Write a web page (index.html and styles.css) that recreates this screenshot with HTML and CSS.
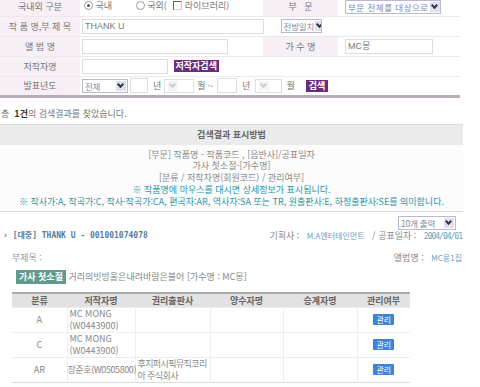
FILE: index.html
```html
<!DOCTYPE html>
<html lang="ko">
<head>
    <meta charset="UTF-8">
    <title>작품검색</title>
    <link rel="stylesheet" href="styles.css">
</head>
<body>
    <table class="search-form">
        <tr>
            <th>국내외 구분</th>
            <td class="val">
                <span class="radio on"></span> 국내
                <span class="radio"></span> 국외(
                <span class="check"></span> 라이브러리)
            </td>
            <th class="th-right">부 &nbsp; 문</th>
            <td class="val"><span class="sel sel-part">부문 전체를 대상으로<i class="arr"></i></span></td>
        </tr>
        <tr>
            <th>작 품 명,부 제 목</th>
            <td class="val" colspan="3">
                <span class="inp inp-title">THANK U</span>
                <span class="sel sel-match">전방일치<i class="arr"></i></span>
            </td>
        </tr>
        <tr>
            <th>앨 범 명</th>
            <td class="val"><span class="inp inp-album"></span></td>
            <th class="th-right">가 수 명</th>
            <td class="val"><span class="inp inp-singer">MC몽</span></td>
        </tr>
        <tr>
            <th>저작자명</th>
            <td class="val" colspan="3">
                <span class="inp inp-author"></span>
                <span class="btn-purple">저작자검색</span>
            </td>
        </tr>
        <tr>
            <th>발표년도</th>
            <td class="val" colspan="3">
                <div class="year-row">
                    <span class="sel sel-all">전체<i class="arr"></i></span>
                    <span class="inp inp-y1"></span>
                    <span class="unit u1">년</span>
                    <span class="sel sel-month m1"><i class="arr"></i></span>
                    <span class="unit u2">월 ~</span>
                    <span class="inp inp-y2"></span>
                    <span class="unit u3">년</span>
                    <span class="sel sel-month m2"><i class="arr"></i></span>
                    <span class="unit u4">월</span>
                    <span class="btn-purple btn-go">검색</span>
                </div>
            </td>
        </tr>
    </table>

    <p class="count">총 &nbsp;<b>1건</b>의 검색결과를 찾았습니다.</p>

    <div class="guide">
        <div class="guide-head">검색결과 표시방법</div>
        <div class="guide-body">
            <p>[부문] 작품명 - 작품코드 , [음반사]/공표일자</p>
            <p>가사 첫소절-[가수명]</p>
            <p>[분류 / 저작자명(회원코드) / 관리여부]</p>
            <p class="note">※ 작품명에 마우스를 대시면 상세정보가 표시됩니다.</p>
            <p class="note">※ 작사가:A, 작곡가:C, 작사·작곡가:CA, 편곡자:AR, 역사자:SA 또는 TR, 원출판사:E, 하청출판사:SE를 의미합니다.</p>
        </div>
    </div>

    <div class="per-page"><span class="sel sel-count">10개 출력<i class="arr"></i></span></div>

    <div class="result">
        <div class="result-line">
            <span class="work-title">› [대중] THANK U - 001001074078</span>
            <span class="meta">기획사 : <em class="ko">M.A엔터테인먼트</em> / 공표일자 : <em>2004/04/01</em></span>
        </div>
        <div class="result-line sub">
            <span class="subtitle">부제목 :</span>
            <span class="meta">앨범명 : <em class="ko">MC몽1집</em></span>
        </div>
        <div class="lyric">
            <span class="badge">가사 첫소절</span> 거리의빗방울은내려바람은불어 [가수명 : MC몽]
        </div>

        <table class="rights">
            <tr>
                <th class="c1">분류</th>
                <th class="c2">저작자명</th>
                <th class="c3">권리출판사</th>
                <th class="c4">양수자명</th>
                <th class="c5">승계자명</th>
                <th class="c6">관리여부</th>
            </tr>
            <tr>
                <td>A</td>
                <td class="left">MC MONG<br>(W0443900)</td>
                <td></td>
                <td></td>
                <td></td>
                <td><span class="btn-blue">관리</span></td>
            </tr>
            <tr>
                <td>C</td>
                <td class="left">MC MONG<br>(W0443900)</td>
                <td></td>
                <td></td>
                <td></td>
                <td><span class="btn-blue">관리</span></td>
            </tr>
            <tr>
                <td>AR</td>
                <td class="nowrap">장준호(W0505800)</td>
                <td class="left tight">후지퍼시픽뮤직코리아 주식회사</td>
                <td></td>
                <td></td>
                <td><span class="btn-blue">관리</span></td>
            </tr>
        </table>
    </div>
    <div class="bottom-line"></div>
</body>
</html>
```

FILE: styles.css
```css
body {
    margin: 0;
    width: 480px;
    font-family: "Noto Sans CJK KR", "Noto Sans", sans-serif;
    font-size: 9px;
    color: #777;
    background: #fff;
    overflow: hidden;
}
p {
    margin: 0;
}

/* search form */
.search-form {
    margin-top: -3px;
    width: 460px;
    border-collapse: collapse;
    border-bottom: 3px solid #b8acb8;
}
.search-form tr {
    height: 20px;
}
.search-form tr:first-child {
    height: 19px;
}
.search-form th {
    width: 80px;
    padding: 0;
    background: #f6eff6;
    font-weight: normal;
    color: #777;
    border-bottom: 1px solid #ece8ec;
    white-space: nowrap;
}
.search-form .th-right {
    width: 75px;
}
.search-form .val {
    padding: 0 0 0 2px;
    border-bottom: 1px solid #ece8ec;
    white-space: nowrap;
    line-height: 14px;
}
.search-form td:nth-child(2) {
    width: 181px;
}
.search-form td.val:last-child {
    padding-left: 7px;
}
.search-form td[colspan] {
    padding-left: 2px !important;
}

.radio, .check {
    display: inline-block;
    width: 7px;
    height: 7px;
    border: 1px solid #999;
    border-radius: 50%;
    vertical-align: -1px;
    margin-left: 2px;
    position: relative;
}
.radio.on::after {
    content: "";
    position: absolute;
    left: 2px;
    top: 2px;
    width: 3px;
    height: 3px;
    border-radius: 50%;
    background: #555;
}
.radio + .radio {
    margin-left: 21px;
}
.check {
    border-radius: 0;
    border-color: #666 #ccc #ccc #666;
    margin-left: 4px;
}

.inp {
    display: inline-block;
    box-sizing: border-box;
    height: 15px;
    border: 1px solid #ddd;
    padding: 0 2px;
    font-family: "Liberation Sans", "Noto Sans CJK KR", sans-serif;
    font-size: 9px;
    line-height: 13px;
    color: #777;
    vertical-align: middle;
}
.inp-title { width: 182px; }
.inp-album { width: 146px; }
.inp-singer { width: 88px; }
.inp-author { width: 86px; }

.year-row {
    display: flex;
    align-items: center;
}
.inp-y1 { width: 18px; margin-left: 2px; }
.inp-y2 { width: 20px; margin-left: 4px; }
.unit { flex: none; }
.u1 { margin-left: 5px; }
.m1 { width: 30px; margin-left: 3px; }
.u2 { margin-left: 3px; }
.u3 { margin-left: 5px; }
.m2 { width: 27px; margin-left: 5px; }
.u4 { margin-left: 4px; }

.sel {
    display: inline-flex;
    align-items: center;
    justify-content: space-between;
    box-sizing: border-box;
    height: 14px;
    border: 1px solid #b8b8d0;
    padding-left: 2px;
    color: #7a86a8;
    background: #fff;
    vertical-align: middle;
    font-size: 8.5px;
    letter-spacing: -0.2px;
    line-height: 12px;
    white-space: nowrap;
    overflow: hidden;
}
.arr {
    flex: none;
    display: inline-block;
    width: 10px;
    height: 10px;
    margin: 1px;
    background: #dde0ee;
    position: relative;
}
.arr::after {
    content: "";
    position: absolute;
    left: 2px;
    top: 1px;
    width: 3px;
    height: 3px;
    border-right: 2px solid #334;
    border-bottom: 2px solid #334;
    transform: rotate(45deg);
}
.sel-part { width: 96px; margin-top: 1px; vertical-align: top; letter-spacing: 0.5px; }
.sel-match { width: 41px; margin-left: 14px; }
.sel-all { width: 46px; }
.sel-month { border-color: #ddd; }
.sel-month .arr { background: #f4f4f4; }
.sel-month .arr::after { border-color: #ccc; }
.sel-count { width: 58px; }

.btn-purple {
    display: inline-block;
    padding: 0 2px;
    height: 12px;
    line-height: 12px;
    background: #6a2c7c;
    color: #fff;
    font-weight: bold;
    font-size: 9px;
    vertical-align: middle;
    margin-left: 3px;
}
.btn-go {
    margin-left: 11px;
    padding: 0 3px;
}

/* result summary */
.count {
    margin: 9px 0 0 1px;
    line-height: 14px;
    color: #777;
}
.count b {
    color: #333;
}

.guide {
    margin-top: 3px;
    width: 463px;
    border-bottom: 1px solid #ddd;
    text-align: center;
}
.guide-head {
    height: 20px;
    line-height: 20px;
    background: #ebebeb;
    border-top: 1px solid #ddd;
    font-weight: bold;
    color: #666;
}
.guide-body {
    padding: 4px 0 3px;
    background: #fcfcfc;
    line-height: 11.9px;
    color: #888;
}
.guide-body .note {
    color: #2b95a6;
    white-space: nowrap;
}

.per-page {
    width: 456px;
    margin-top: 3px;
    line-height: 14px;
    height: 14px;
    text-align: right;
}

.result {
    width: 462px;
}
.result-line {
    display: flex;
    justify-content: space-between;
    align-items: center;
    height: 14px;
    margin-top: 0;
    line-height: 14px;
}
.result-line.sub {
    margin-top: 8px;
}
.work-title {
    padding-left: 3px;
    font-family: "DejaVu Sans Mono", "Noto Sans CJK KR", monospace;
    font-size: 8px;
    font-weight: bold;
    color: #5a7a9a;
}
.meta {
    color: #888;
}
.meta em {
    font-style: normal;
    color: #6aa0c0;
    font-family: "DejaVu Sans Mono", "Noto Sans CJK KR", monospace;
    font-size: 8px;
    letter-spacing: -1px;
    margin: 0 5px;
}
.meta em.ko {
    font-family: "Noto Sans CJK KR", sans-serif;
    letter-spacing: 0;
}
.meta em:last-child {
    margin-right: 0;
}
.subtitle {
    padding-left: 12px;
    color: #999;
}
.lyric {
    margin: 5px 0 0 16px;
    line-height: 14px;
    height: 14px;
    color: #888;
    white-space: nowrap;
}
.badge {
    display: inline-block;
    background: #5f9a8c;
    color: #fff;
    font-weight: bold;
    padding: 0 3px;
    line-height: 14px;
}

.rights {
    margin: 8px 0 0 12px;
    width: 398px;
    border-collapse: collapse;
    border-top: 2px solid #aaa;
    border-bottom: 1px solid #ddd;
    table-layout: fixed;
}
.rights th {
    height: 13px;
    background: #e2e2e2;
    color: #666;
    padding: 0;
    line-height: 13px;
}
.rights td {
    height: 23px;
    padding: 0;
    text-align: center;
    line-height: 12px;
    border-right: 1px solid #eee;
    border-top: 1px solid #eee;
    color: #888;
}
.rights td:last-child {
    border-right: none;
}
.rights td.left {
    text-align: left;
    padding-left: 2px;
}
.rights td.tight {
    letter-spacing: -0.6px;
}
.rights td.nowrap {
    white-space: nowrap;
    letter-spacing: -0.4px;
    overflow: visible;
}
.c1 { width: 55px; }
.c2 { width: 68px; }
.c3 { width: 75px; }
.c4 { width: 73px; }
.c5 { width: 74px; }
.c6 { width: 53px; }

.btn-blue {
    display: inline-block;
    background: #3b84d6;
    color: #fff;
    font-size: 8px;
    line-height: 11px;
    padding: 0 3px;
    border-radius: 1px;
}

.bottom-line {
    margin-top: 4px;
    height: 2px;
    background: #bbb;
}
```
